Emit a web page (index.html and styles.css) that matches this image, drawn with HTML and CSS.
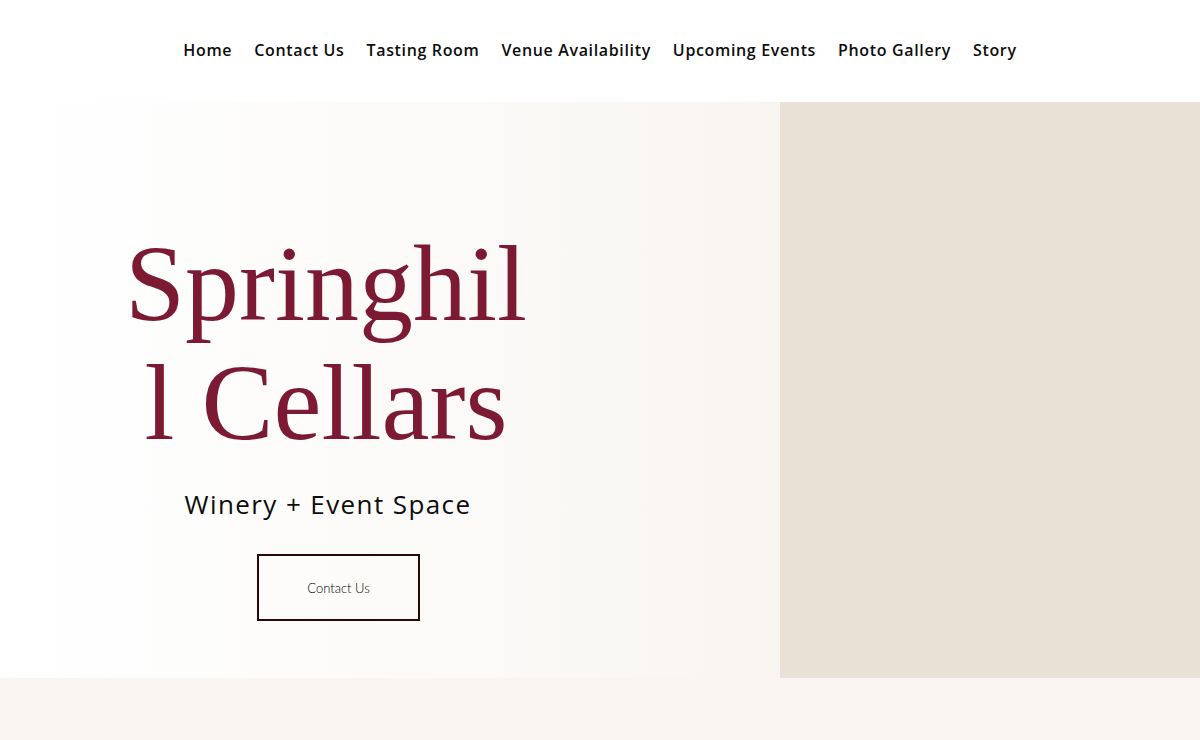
FILE: index.html
```html
<!DOCTYPE html>
<html lang="en">
<head>
<meta charset="utf-8">
<title>Springhill Cellars</title>
<link rel="stylesheet" href="styles.css">
</head>
<body>
<header class="site-header">
  <nav class="main-nav">
    <a href="#">Home</a>
    <a href="#">Contact Us</a>
    <a href="#">Tasting Room</a>
    <a href="#">Venue Availability</a>
    <a href="#">Upcoming Events</a>
    <a href="#">Photo Gallery</a>
    <a href="#">Story</a>
  </nav>
</header>
<section class="hero">
  <div class="hero-left">
    <div class="hero-col">
      <h1 class="hero-title">Springhill Cellars</h1>
      <p class="hero-sub">Winery + Event Space</p>
      <a class="hero-btn" href="#">Contact Us</a>
    </div>
  </div>
  <div class="hero-right"></div>
</section>
<section class="below"></section>
</body>
</html>
```
FILE: styles.css
```css
html, body {
  margin: 0;
  padding: 0;
}
body {
  background: #f9f6f1;
  font-family: "Open Sans", "Liberation Sans", sans-serif;
  color: #111;
}
.site-header {
  height: 102px;
  background: #ffffff;
  display: flex;
  justify-content: center;
  align-items: center;
}
.main-nav {
  display: flex;
  gap: 22px;
  padding-bottom: 2px;
}
.main-nav a {
  font-family: "Open Sans", sans-serif;
  font-weight: 600;
  font-size: 16px;
  color: #0d0d0d;
  text-decoration: none;
  letter-spacing: 0.65px;
}
.hero {
  display: flex;
  height: 576px;
}
.hero-left {
  width: 780px;
  background: linear-gradient(90deg, #ffffff 0%, #fdfcfb 40%, #f8f5f1 100%);
  padding-top: 122px;
  box-sizing: border-box;
}
.hero-right {
  flex: 1;
  background: #e9e1d6;
}
.hero-col {
  width: 420px;
  margin-left: 116px;
  display: flex;
  flex-direction: column;
  align-items: center;
}
.hero-title {
  margin: 0;
  width: 420px;
  font-family: "Liberation Serif", serif;
  font-weight: 400;
  font-size: 108px;
  line-height: 119px;
  color: #7c1a34;
  text-align: center;
  word-break: break-all;
}
.hero-sub {
  margin: 27px 0 0;
  padding-left: 4px;
  font-family: "Open Sans", sans-serif;
  font-size: 26px;
  line-height: 31px;
  color: #0d0d0d;
  letter-spacing: 1.4px;
}
.hero-btn {
  margin-top: 34px;
  align-self: flex-start;
  margin-left: 141px;
  width: 163px;
  height: 67px;
  box-sizing: border-box;
  border: 2px solid #2a0808;
  display: flex;
  align-items: center;
  justify-content: center;
  font-family: "Lato", sans-serif;
  font-weight: 300;
  font-size: 13px;
  color: #000;
  text-decoration: none;
}
.below {
  height: 62px;
  background: #f9f6f1;
}
```
